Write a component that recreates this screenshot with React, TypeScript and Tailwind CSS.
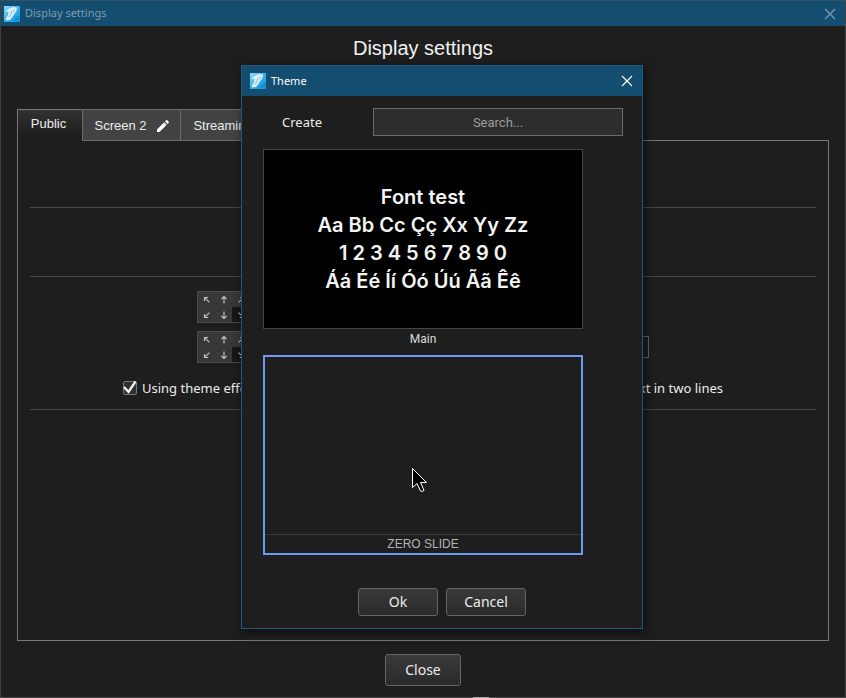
import React from "react";

const ui = "font-['Noto_Sans',sans-serif]";
const sans = "font-['Liberation_Sans',Arial,sans-serif]";

function AppIcon({ className = "" }: { className?: string }) {
  return (
    <svg viewBox="0 0 16 16" className={"size-4 shrink-0 " + className} aria-hidden="true">
      <defs>
        <linearGradient id="logo" x1="0" y1="0" x2="1" y2="1">
          <stop offset="0" stopColor="#8fdcf8" />
          <stop offset="0.5" stopColor="#35b2ea" />
          <stop offset="1" stopColor="#0791db" />
        </linearGradient>
      </defs>
      <rect width="16" height="16" fill="url(#logo)" />
      <path d="M1.500 5.500 5 2.500 9 1 13 1.500 12.500 5 10 8.500 8 11.500 6 14 3 14.500 1.500 13 4 9 4.500 6Z" fill="#dfeef4" />
      <path d="M8 4.500 7 8 5 11.500M10.500 3.500 9.500 6.500" stroke="#7fbcd8" strokeWidth="0.9" fill="none" />
      <path d="M10 14c3 .3 4.500-1.500 4.500-4M11 11.500l1 1" stroke="#0871b8" strokeWidth="0.8" fill="none" />
    </svg>
  );
}

function CloseIcon() {
  return (
    <svg viewBox="0 0 12 12" className="size-3" stroke="currentColor" strokeWidth="1.2" aria-hidden="true">
      <path d="M1 1 11 11M11 1 1 11" />
    </svg>
  );
}

const angles = [-45, 0, 45, -135, 180, 135];

function DirectionPad() {
  return (
    <div className="grid h-8 w-[53px] grid-cols-3 grid-rows-2 border border-[#4b4b4b] bg-[#383838]">
      {angles.map((a) => (
        <button
          key={a}
          aria-label={"Direction " + a}
          className={"flex items-center justify-center text-[#c4c4c4] " + (a === 135 ? "bg-[#181818]" : "")}
        >
          <svg viewBox="0 0 10 10" className="size-[10px]" fill="none" stroke="currentColor" strokeWidth="1.1">
            <path d="M5 8.500V1.500M2.500 4 5 1.500 7.500 4" transform={`rotate(${a} 5 5)`} />
          </svg>
        </button>
      ))}
    </div>
  );
}

function Check({ label, checked }: { label: string; checked?: boolean }) {
  return (
    <label className={ui + " flex items-center gap-[5px] text-[13px] leading-4 text-[#ececec]"}>
      <span className="relative size-[14px]">
        <input
          type="checkbox"
          defaultChecked={checked}
          className="peer block size-[14px] appearance-none rounded-[2px] border border-[#777] bg-[#303030]"
        />
        <svg viewBox="0 0 14 14" className="pointer-events-none absolute inset-0 hidden overflow-visible peer-checked:block">
          <path d="M1 6 5.500 11 12.500 0.500" fill="none" stroke="#f4f4f4" strokeWidth="2.300" />
        </svg>
      </span>
      {label}
    </label>
  );
}

function ThemeDialog() {
  return (
    <div
      role="dialog"
      aria-label="Theme"
      className="absolute top-16 left-60 z-10 w-[402px] border border-[#1e5a80] bg-[#1e1e1e] pb-3 shadow-[2px_3px_10px_rgba(0,0,0,0.6)]"
    >
      <div className="flex h-[30px] items-center bg-[#134d6f] pr-[9px] pl-2">
        <AppIcon />
        <span className={ui + " ml-[5px] text-[11px] text-white"}>Theme</span>
        <button aria-label="Close" className="ml-auto text-white">
          <CloseIcon />
        </button>
      </div>
      <div className="flex pt-3 pr-[19px] pl-5">
        <button className={ui + " w-20 pt-0.5 text-[13px] text-[#ececec]"}>Create</button>
        <input
          type="text"
          aria-label="Search"
          placeholder="Search..."
          className="ml-[31px] h-7 min-w-0 flex-1 border border-[#6b6b6b] bg-[#2d2d2d] text-center font-[Roboto,sans-serif] text-[13px] placeholder:text-[#9c9c9c]"
        />
      </div>
      <div className="mt-[13px] ml-[21px] w-80">
        <button className="flex w-full flex-col items-center">
          <span className="flex h-[180px] w-full flex-col justify-center border border-[#444] bg-black text-center font-[Inter,sans-serif] text-xl leading-7 font-semibold text-[#f4f4f4]">
            <span>Font test</span>
            <span>Aa Bb Cc Çç Xx Yy Zz</span>
            <span>1 2 3 4 5 6 7 8 9 0</span>
            <span>Áá Éé Íí Óó Úú Ãã Êê</span>
          </span>
          <span className="font-[Roboto,sans-serif] text-xs leading-5 text-[#ddd]">Main</span>
        </button>
        <button className="mt-[6px] flex h-[200px] w-full flex-col border-2 border-[#6b9bf0]">
          <span className="flex-1" />
          <span className={sans + " w-full border-t border-[#3a3a3a] pt-px text-center text-xs leading-[17px] text-[#b4b4b4]"}>
            ZERO SLIDE
          </span>
        </button>
      </div>
      <div className="mt-[33px] flex justify-center gap-2">
        {["Ok", "Cancel"].map((t) => (
          <button
            key={t}
            className={ui + " h-7 w-20 rounded-[3px] border border-[#666] bg-linear-to-b from-[#3a3a3a] to-[#2a2a2a] text-sm text-[#ececec]"}
          >
            {t}
          </button>
        ))}
      </div>
    </div>
  );
}

export default function App() {
  return (
    <div className="relative flex min-h-screen flex-col border-x border-t border-x-[#414141] border-t-[#345266] bg-[#1e1e1e]">
      <header className="flex h-[25px] items-center bg-[#134d6f] pr-[9px] pl-[3px] text-[#7d9db1]">
        <AppIcon />
        <span className={ui + " ml-[5px] text-[11px]"}>Display settings</span>
        <button aria-label="Close window" className="ml-auto">
          <CloseIcon />
        </button>
      </header>
      <h1 className={sans + " mt-2 text-center text-xl leading-7 text-[#f2f2f2]"}>Display settings</h1>

      <main className="mt-[47px] flex flex-1 flex-col px-4">
        <div role="tablist" className={sans + " z-1 flex text-[13px] text-[#ececec]"}>
          <button
            role="tab"
            aria-selected="true"
            className="h-8 w-[65px] border-t border-l border-[#777] bg-linear-to-b from-[#323232] to-[#1e1e1e] to-80% pr-[3px] pb-[3px]"
          >
            Public
          </button>
          <button role="tab" className="flex h-8 w-[99px] items-center justify-center gap-[10px] border border-[#6b6b6b] bg-[#434343] pt-px">
            Screen 2
            <svg viewBox="0 0 12 12" className="size-3" fill="#fff" aria-hidden="true">
              <path d="M0 9.500V12H2.500L9.700 4.800 7.200 2.300ZM11.700 2.800A.8.8 0 0 0 11.700 1.700L10.300.3A.8.8 0 0 0 9.200.3L8 1.500 10.500 4Z" />
            </svg>
          </button>
          <button role="tab" className="-ml-px h-8 w-[86px] border border-[#6b6b6b] bg-[#434343] pt-px">
            Streaming
          </button>
        </div>

        <section className="-mt-px flex-1 border border-[#777] px-3">
          <div className="h-[67px] border-b border-[#484848]" />
          <div className="h-[69px] border-b border-[#484848]" />
          <div className="h-[133px] border-b border-[#484848] pt-[14px]">
            <div className="mx-auto flex w-[452px] flex-col gap-2">
              <DirectionPad />
              <div className="flex items-center justify-between">
                <DirectionPad />
                <input aria-label="Value" className="h-[22px] w-20 border border-[#666] bg-transparent" />
              </div>
            </div>
            <div className="mx-auto mt-[17px] flex w-[600px] justify-between">
              <Check label="Using theme effects" checked />
              <Check label="Translated text in two lines" />
            </div>
          </div>
        </section>
      </main>

      <footer className="flex justify-center pt-[13px] pb-[11px]">
        <button
          className={ui + " h-8 w-[76px] rounded-[3px] border border-[#666] bg-linear-to-b from-[#3a3a3a] to-[#2a2a2a] text-sm text-[#ececec]"}
        >
          Close
        </button>
      </footer>
      <div className="flex h-px justify-center bg-[#4a4a4a] pl-[116px]">
        <div className="w-4 bg-[#aaa]" />
      </div>
      <ThemeDialog />
      <svg
        viewBox="0 0 16 26"
        className="pointer-events-none absolute top-[466px] left-[411px] z-20 h-[26px] w-4"
        fill="#000"
        stroke="#fff"
        strokeWidth="1"
        aria-hidden="true"
      >
        <path d="M.5 1.500V20.500L5 16.500 8.500 24 10 24.500 12 23.500 8.500 15.500H14.500Z" />
      </svg>
    </div>
  );
}
